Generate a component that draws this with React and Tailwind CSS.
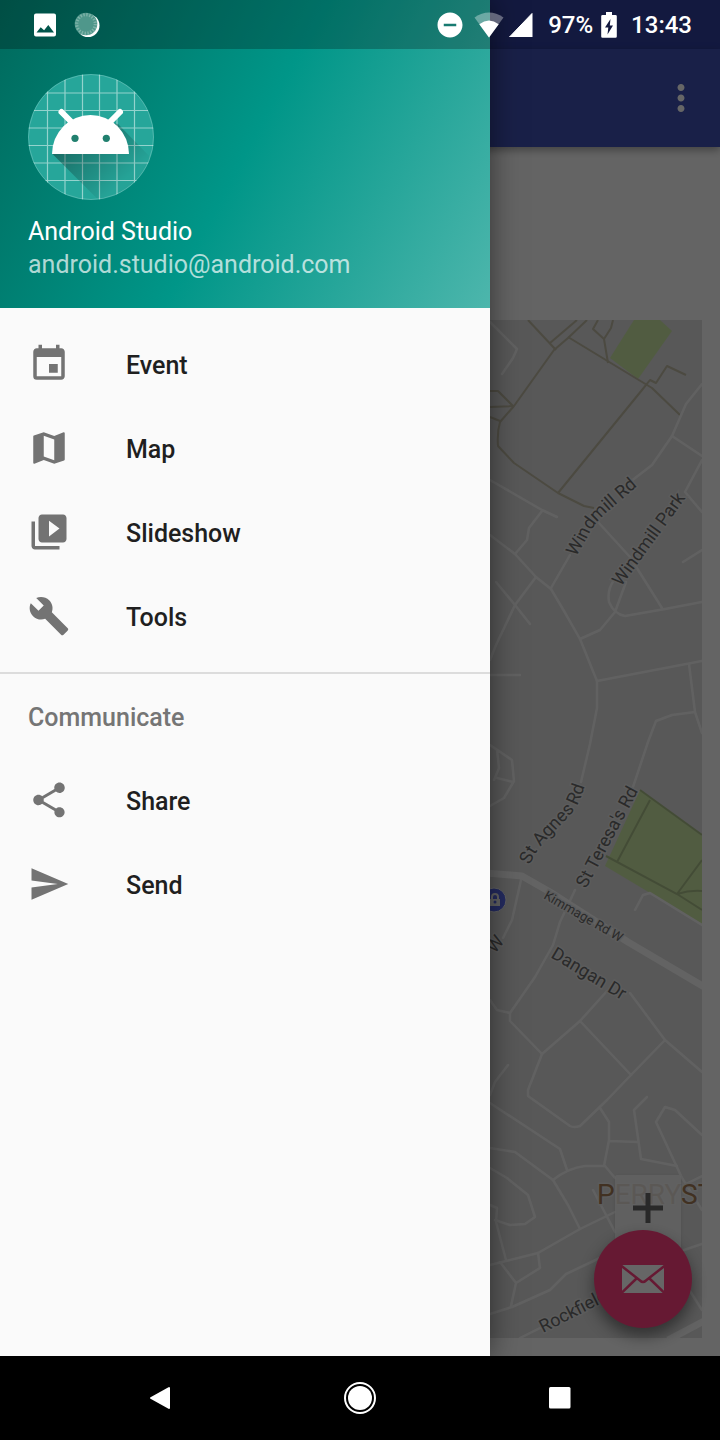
import React from "react";
import {
  MdBuild,
  MdDoNotDisturbOn,
  MdEvent,
  MdMap,
  MdMoreVert,
  MdSend,
  MdShare,
  MdVideoLibrary,
} from "react-icons/md";

const mainItems = [
  { label: "Event", Icon: MdEvent },
  { label: "Map", Icon: MdMap },
  { label: "Slideshow", Icon: MdVideoLibrary },
  { label: "Tools", Icon: MdBuild },
];

const communicateItems = [
  { label: "Share", Icon: MdShare },
  { label: "Send", Icon: MdSend },
];

const footpaths = [
  "M528 320L556 350",
  "M577 320L550 343",
  "M587 320L568 338L554 350L514 406L500 422Q497 432 498 446L514 463L558 493L584 506L594 508",
  "M568 337L652 388L680 415",
  "M558 493L642 390L650 380L656 383L667 366L686 375",
  "M598 320L593 329L604 339L611 328L613 320M604 339L608 363",
  "M490 391H498L513 406L490 407M490 417L500 421",
];

const roads = [
  "M490 322L517 349L513 358L502 374",
  "M490 480L542 510L557 517M542 511L529 528L527 540L515 554",
  "M490 535L515 554L536 577L551 589L564 611L580 639L597 681V708L590 744L581 782",
  "M702 384L686 404L672 436L652 465L630 482",
  "M672 436L702 456M702 460L685 492L702 512M702 550L683 562",
  "M598 522L630 557L640 573L662 608M551 588L570 555",
  "M702 602L665 609L625 616Q614 614 609 602Q607 590 614 580M626 582L615 612L600 630L580 639",
  "M536 577L515 605L496 645L490 660M496 582L515 605L530 624",
  "M490 675H520",
  "M597 681L702 661M689 664L695 712L702 733M695 712L672 715L656 721L648 742L633 787",
  "M490 745L512 760L514 781L504 798L490 806M497 750L499 768L494 780M497 778L513 782",
  "M521 880L512 920L503 938",
  "M575 890L560 922L553 945L535 977L510 1013V1021L542 1054L580 1021L607 991",
  "M490 1000L497 1010L510 1013M580 1021L631 1075L607 1100L580 1126Q574 1128 570 1126L528 1096V1090L542 1054",
  "M630 993L665 1040L702 1072M665 1040L631 1075",
  "M635 910L643 895L650 893L702 925",
  "M508 1065L495 1082L490 1095",
  "M490 1103L560 1149L567 1170",
  "M490 1148L515 1152L553 1180Q568 1168 585 1166H605L615 1178",
  "M600 1108L609 1122V1140L604 1166M609 1141L638 1142",
  "M647 1097L634 1110L641 1159L677 1166",
  "M702 1135L675 1110L665 1107L656 1122L682 1178L702 1210",
  "M490 1168L507 1178L528 1195L535 1217L525 1224L510 1225L495 1220",
  "M490 1205L497 1208L496 1222L506 1260M553 1180L568 1205L580 1229",
  "M490 1265L538 1253L580 1229L615 1212M593 1190L615 1232",
  "M538 1253L540 1268L516 1283L500 1262M516 1283L511 1306",
  "M490 1314L512 1307L550 1290L566 1274L602 1257L640 1244",
  "M520 1338L560 1318M684 1250L702 1244M688 1288L702 1310M682 1186L702 1176",
];

function StreetMap() {
  return (
    <svg
      className="absolute inset-0 h-full w-full bg-[#dbdbdb]"
      viewBox="18 320 684 1018"
      preserveAspectRatio="xMaxYMin slice"
      fontFamily="Roboto, sans-serif"
      role="img"
      aria-label="Street map"
    >
      <defs>
        <path id="windmill-rd" d="M576 557L588 536Q593 525 605 514L642 482" />
        <path id="agnes-rd" d="M530 865Q535 851 549 837L573 812Q581 801 587 778" />
      </defs>
      <g fill="#cbe6a3">
        <path d="M634 320H660L672 331L638 379L610 358Z" />
        <path d="M640 790L702 836V924L605 866Z" />
      </g>
      <g fill="none" stroke="#bdb8a2" strokeWidth="2" strokeLinejoin="round">
        {footpaths.map((d) => (
          <path key={d} d={d} />
        ))}
      </g>
      <path
        d="M640 790L702 835M650 800L617 862M606 856L677 894L702 910M677 894L702 860M677 894Q690 890 702 891"
        fill="none"
        stroke="#a9bd88"
        strokeWidth="2"
      />
      <g fill="none" stroke="#f3f3f3" strokeWidth="2.5" strokeLinejoin="round" strokeLinecap="round">
        {roads.map((d) => (
          <path key={d} d={d} />
        ))}
      </g>
      <path
        d="M486 873L522 876L550 892L628 942L706 988"
        fill="none"
        stroke="#f7f7f7"
        strokeWidth="7"
        strokeLinejoin="round"
      />
      <path d="M706 1320L668 1340" stroke="#f7f7f7" strokeWidth="7" />
      <circle cx="494" cy="900" r="12" fill="#5a6cf0" stroke="#f5f5f5" strokeWidth="1" />
      <path d="M489 899h11v7h-11z" fill="#f5f5f5" />
      <path d="M492 899v-2a3 3 0 0 1 6 0v2" fill="none" stroke="#f5f5f5" strokeWidth="2" />
      <circle cx="495" cy="902" r="1.5" fill="#5a6cf0" />
      <g fill="#6a6a6a" stroke="#e6e6e6" strokeWidth="3" paintOrder="stroke" fontSize="18">
        <text>
          <textPath href="#windmill-rd">Windmill Rd</textPath>
        </text>
        <text transform="translate(621 587) rotate(-54)">Windmill Park</text>
        <text>
          <textPath href="#agnes-rd">St Agnes Rd</textPath>
        </text>
        <text transform="translate(586 889) rotate(-62)">St Teresa's Rd</text>
        <text transform="translate(543 898) rotate(30)" fontSize="13">
          Kimmage Rd W
        </text>
        <text transform="translate(550 957) rotate(31)">Dangan Dr</text>
        <text transform="translate(495 954) rotate(-52)">W</text>
        <text transform="translate(543 1333) rotate(-27)">Rockfield</text>
      </g>
      <text x="597" y="1204" fontSize="28" fill="#a27a55" stroke="#e6e6e6" strokeWidth="3" paintOrder="stroke">
        PERRYST
      </text>
    </svg>
  );
}

function Avatar() {
  return (
    <svg className="h-[126px] w-[126px]" viewBox="28 74 126 126" aria-hidden="true">
      <defs>
        <clipPath id="disc">
          <circle cx="91" cy="137" r="63" />
        </clipPath>
        <linearGradient id="cast" gradientUnits="userSpaceOnUse" x1="75" y1="130" x2="122" y2="182">
          <stop offset="0" stopOpacity="0.36" />
          <stop offset="1" stopOpacity="0.02" />
        </linearGradient>
      </defs>
      <g clipPath="url(#disc)">
        <path d="M28 74h126v126H28z" fill="#26a69a" />
        <path
          d="M47.500 74V200M65 74V200M82.500 74V200M99.500 74V200M117 74V200M134.500 74V200M28 93H154M28 110.500H154M28 128H154M28 145.500H154M28 163H154M28 180.500H154"
          fill="none"
          stroke="#fff"
          strokeOpacity="0.5"
          strokeWidth="1.200"
        />
        <path d="M52 153.500L102 203.500H154V161L118 124L90 120Z" fill="url(#cast)" />
      </g>
      <circle cx="91" cy="137" r="62.500" fill="none" stroke="#fff" strokeOpacity="0.2" />
      <path d="M52 154a38.500 39 0 0 1 77 0z" fill="#fff" />
      <path d="M61.500 112L72 122.500M120 112L109.500 122.500" stroke="#fff" strokeWidth="6" strokeLinecap="round" />
      <circle cx="75" cy="138.300" r="3.600" fill="#21806f" />
      <circle cx="106.300" cy="138.300" r="3.600" fill="#21806f" />
    </svg>
  );
}

function StatusBar() {
  return (
    <div className="absolute inset-x-0 top-0 flex h-[49px] items-center pr-7 pl-[33px] text-2xl font-medium text-white">
      <svg className="h-6 w-6" viewBox="0 0 24 24" aria-hidden="true">
        <path
          fillRule="evenodd"
          d="M3 .5h18a2 2 0 0 1 2 2v19a2 2 0 0 1-2 2H3a2 2 0 0 1-2-2v-19a2 2 0 0 1 2-2zM3.500 19.500h17.500l-5.700-7.500-4.200 5.300-3.400-3z"
          fill="#fff"
        />
      </svg>
      <svg className="ml-[17px] h-[26px] w-[26px]" viewBox="0 0 26 26" aria-hidden="true">
        <circle cx="14" cy="13.500" r="11.500" fill="#fff" />
        <circle cx="12" cy="12" r="11.300" fill="#4f978b" />
        <circle cx="12" cy="12" r="9.300" fill="none" stroke="#7fb3a9" strokeWidth="3.200" strokeDasharray="1.400 1.520" />
      </svg>
      <div className="ml-auto flex items-center">
        <MdDoNotDisturbOn className="h-[30px] w-[30px]" aria-hidden="true" />
        <svg className="ml-[9px] h-[26px] w-[30px]" viewBox="0 0 30 26" aria-hidden="true">
          <path d="M15 25.500L.5 5.500Q15-4.500 29.500 5.500Z" fill="#fff" fillOpacity="0.35" />
          <path d="M15 25.500L5.300 12.200Q15 5 24.700 12.200Z" fill="#fff" />
        </svg>
        <svg className="ml-[5px] h-6 w-6" viewBox="0 0 24 24" aria-hidden="true">
          <path d="M23 .5V24H.5Z" fill="#fff" stroke="#fff" strokeWidth="1" strokeLinejoin="round" />
        </svg>
        <span className="ml-[15px]">97%</span>
        <svg className="ml-2 h-[26px] w-4" viewBox="0 0 16 26" aria-hidden="true">
          <path
            fillRule="evenodd"
            d="M5 0h6v3h3.500a1.300 1.300 0 0 1 1.300 1.300v20.200a1.300 1.300 0 0 1-1.300 1.300h-13A1.300 1.300 0 0 1 .2 24.500V4.300A1.300 1.300 0 0 1 1.500 3H5zM9.500 7L4 15.500h3.300L6.500 22.500L12 13.500H8.800z"
            fill="#fff"
          />
        </svg>
        <span className="ml-[14px]">13:43</span>
      </div>
    </div>
  );
}

function NavItem({ label, Icon }) {
  return (
    <li>
      <a href={`#${label.toLowerCase()}`} className="flex h-[84px] items-center gap-14 px-7 text-[#1f1f1f]">
        <Icon className="h-[42px] w-[42px] shrink-0 text-[#737373]" aria-hidden="true" />
        <span className="pt-1">{label}</span>
      </a>
    </li>
  );
}

function Drawer() {
  return (
    <aside className="absolute inset-y-0 left-0 w-[490px] max-w-full bg-[#fafafa] shadow-[0_0_28px_rgba(0,0,0,0.5)]">
      <header className="bg-[linear-gradient(118deg,#00695c,#009688_50%,#4db6ac)] pb-[27px] text-[25px] leading-[33px] text-white">
        <div className="h-[49px] bg-black/25" />
        <div className="px-7 pt-[25px]">
          <Avatar />
          <p className="mt-[15px]">Android Studio</p>
          <p className="text-white/70">android.studio@android.com</p>
        </div>
      </header>
      <nav className="pt-[14px] text-[25px] font-medium">
        <ul className="pb-[14px]">
          {mainItems.map((item) => (
            <NavItem key={item.label} {...item} />
          ))}
        </ul>
        <h2 className="flex h-[86px] items-center border-t-2 border-[#dcdcdc] px-7 pt-1 text-[#757575]">
          Communicate
        </h2>
        <ul>
          {communicateItems.map((item) => (
            <NavItem key={item.label} {...item} />
          ))}
        </ul>
      </nav>
    </aside>
  );
}

function Page() {
  return (
    <div className="flex flex-1 flex-col">
      <div className="h-[49px] bg-[#303f9f]" />
      <header className="relative flex h-[98px] items-center justify-end bg-[#3f51b5] pr-[18px] text-white shadow-[0_3px_8px_rgba(0,0,0,0.35)]">
        <button type="button" aria-label="More options">
          <MdMoreVert className="h-[42px] w-[42px]" />
        </button>
      </header>
      <main className="flex flex-1 flex-col px-[18px] pt-[173px] pb-[18px]">
        <div className="relative flex-1 overflow-hidden">
          <StreetMap />
          <button
            type="button"
            aria-label="Zoom in"
            className="absolute right-[21px] bottom-[87px] flex h-[76px] w-[66px] items-start justify-center rounded-t-xs bg-[#f5f5f5]/80 pt-[18px] shadow-sm"
          >
            <svg className="h-[30px] w-[30px]" viewBox="0 0 30 30" aria-hidden="true">
              <path d="M15 0V30M0 15H30" stroke="#666" strokeWidth="5" />
            </svg>
          </button>
        </div>
      </main>
      <button
        type="button"
        aria-label="Compose"
        className="absolute right-7 bottom-7 flex h-[98px] w-[98px] items-center justify-center rounded-full bg-[#ff4081] shadow-[0_8px_16px_rgba(0,0,0,0.45)]"
      >
        <svg className="h-7 w-[42px]" viewBox="0 0 42 28" aria-hidden="true">
          <path d="M0 0H42V28H0Z" fill="#fff" />
          <path
            d="M-1 .5L18 15.500Q21 18.500 24 15.500L43 .5M-1 28.500L14.500 13.500M43 28.500L27.500 13.500"
            fill="none"
            stroke="#ff4081"
            strokeWidth="2.500"
          />
        </svg>
      </button>
    </div>
  );
}

function SystemNav() {
  return (
    <nav className="grid h-[84px] grid-cols-3 bg-black px-15" aria-label="System">
      <button type="button" aria-label="Back" className="flex items-center justify-center">
        <svg className="h-6 w-6" viewBox="0 0 24 24" aria-hidden="true">
          <path d="M21 2V22L3 12Z" fill="#fff" stroke="#fff" strokeWidth="2" strokeLinejoin="round" />
        </svg>
      </button>
      <button type="button" aria-label="Home" className="flex items-center justify-center">
        <svg className="h-8 w-8" viewBox="0 0 32 32" aria-hidden="true">
          <circle cx="16" cy="16" r="15" fill="none" stroke="#fff" strokeWidth="2" />
          <circle cx="16" cy="16" r="12" fill="#fff" />
        </svg>
      </button>
      <button type="button" aria-label="Recent apps" className="flex items-center justify-center">
        <svg className="h-6 w-6" viewBox="0 0 24 24" aria-hidden="true">
          <rect x="1" y="1" width="21.500" height="21.500" rx="1.500" fill="#fff" />
        </svg>
      </button>
    </nav>
  );
}

export default function App() {
  return (
    <div className="flex min-h-screen flex-col bg-[#fafafa] font-['Roboto',sans-serif]">
      <div className="relative flex flex-1 flex-col overflow-hidden">
        <Page />
        <div className="absolute inset-0 bg-black/60" />
        <Drawer />
        <StatusBar />
      </div>
      <SystemNav />
    </div>
  );
}
